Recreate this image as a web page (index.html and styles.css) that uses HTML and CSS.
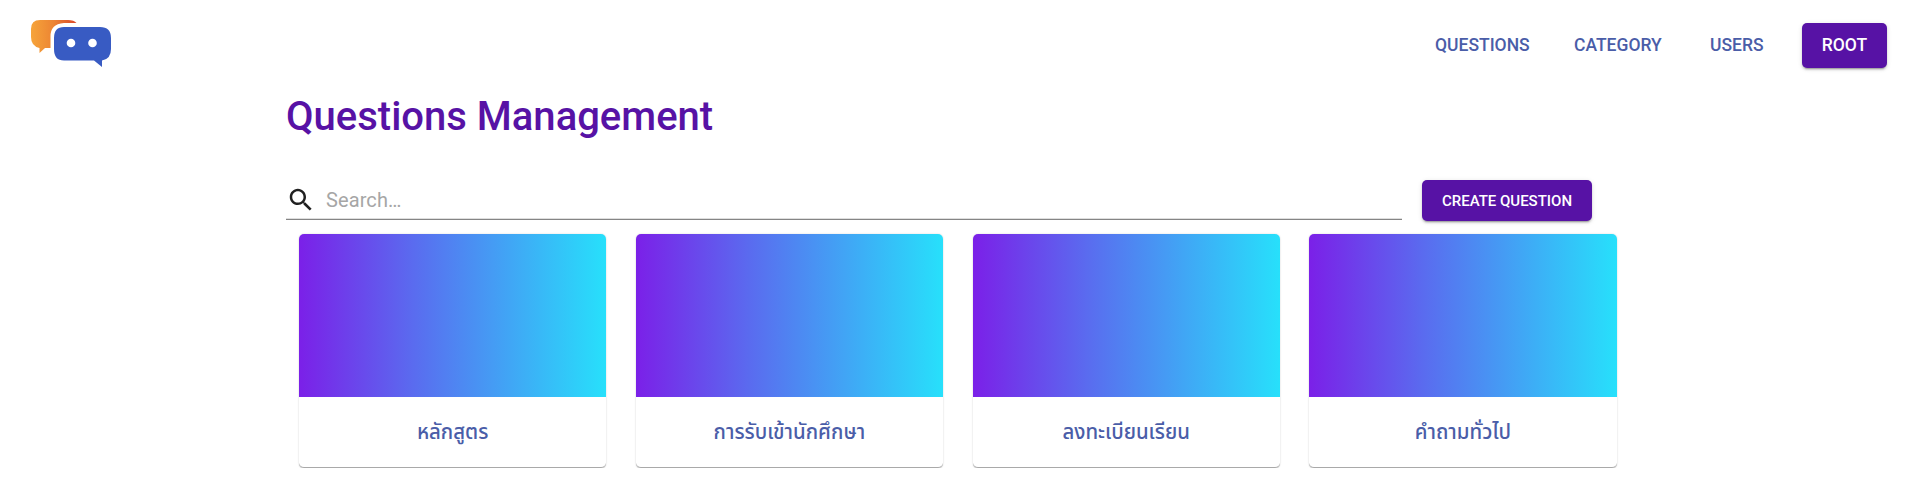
FILE: index.html
```html
<!DOCTYPE html>
<html lang="th">
<head>
<meta charset="utf-8">
<title>Questions Management</title>
<link rel="stylesheet" href="styles.css">
</head>
<body>
<header class="topbar">
  <a class="logo">
    <svg width="84" height="54" viewBox="0 0 84 54">
      <defs><linearGradient id="orange" x1="0" x2="1"><stop offset="0" stop-color="#f6a43a"/><stop offset=".5" stop-color="#ec8433"/><stop offset="1" stop-color="#d9482b"/></linearGradient></defs>
      <path fill="url(#orange)" d="M10 5H38Q44 5 46.500 8H34Q20 9 20.500 22V33H15L9.500 38V33Q1 31 1 22V14Q1 5 10 5Z"/>
      <path fill="#385bc3" d="M34 12H70Q81 12 81 23V34Q81 44 72 45.500V52L64 45.500H34Q24 45.500 24 34V23Q24 12 34 12Z"/>
      <circle cx="41" cy="28" r="4.300" fill="#fff"/><circle cx="62.500" cy="28" r="4.300" fill="#fff"/>
    </svg>
  </a>
  <nav class="nav">
    <a class="nav-link questions">QUESTIONS</a>
    <a class="nav-link category">CATEGORY</a>
    <a class="nav-link users">USERS</a>
    <button class="button root">ROOT</button>
  </nav>
</header>
<main class="content">
  <h1 class="title">Questions Management</h1>
  <div class="toolbar">
    <label class="search">
      <svg class="search-icon" viewBox="0 0 24 24"><path fill="#212121" d="M15.500 14h-.79l-.28-.27C15.410 12.590 16 11.110 16 9.500 16 5.910 13.090 3 9.500 3S3 5.910 3 9.500 5.910 16 9.500 16c1.610 0 3.090-.59 4.230-1.570l.27.28v.79l5 4.990L20.490 19l-4.990-5zm-6 0C7.010 14 5 11.990 5 9.500S7.010 5 9.500 5 14 7.010 14 9.500 11.990 14 9.500 14z"/></svg>
      <input class="search-input" type="text" placeholder="Search…">
    </label>
    <button class="button create">CREATE QUESTION</button>
  </div>
  <section class="cards">
    <article class="card"><div class="cover"></div><h2 class="name">หลักสูตร</h2></article>
    <article class="card"><div class="cover"></div><h2 class="name">การรับเข้านักศึกษา</h2></article>
    <article class="card"><div class="cover"></div><h2 class="name">ลงทะเบียนเรียน</h2></article>
    <article class="card"><div class="cover"></div><h2 class="name">คำถามทั่วไป</h2></article>
  </section>
</main>
</body>
</html>
```
FILE: styles.css
```css
* { box-sizing: border-box; }
body { margin: 0; background: #fff; font-family: Roboto, "Noto Sans Thai", "Noto Sans", sans-serif; }
.topbar { display: flex; justify-content: space-between; height: 91px; padding: 15px 29px 0 30px; }
.logo { display: block; height: 54px; }
.nav { display: flex; align-items: center; height: 61px; }
.nav-link { padding-bottom: 2px; font-size: 17.5px; font-weight: 500; line-height: 28px; color: #4a5da8; white-space: nowrap; }
.questions { width: 139px; }
.category { width: 136px; }
.users { width: 92px; }
.button { border: 0; padding: 0; border-radius: 5px; background: #5712a5; color: #fff; font-family: inherit; font-weight: 500; text-align: center; white-space: nowrap; box-shadow: 0 3px 1px -2px rgba(0,0,0,.2), 0 2px 2px rgba(0,0,0,.14), 0 1px 5px rgba(0,0,0,.12); }
.root { width: 85px; height: 45px; padding-bottom: 2px; font-size: 17.5px; }
.content { width: 1345px; margin-left: 286px; }
.title { margin: 0; height: 89px; padding-top: 1px; font-size: 40px; line-height: 50px; font-weight: 500; color: #5712a5; }
.toolbar { display: flex; gap: 20px; height: 54px; }
.search { display: flex; align-items: center; width: 1116px; height: 40px; border-bottom: 1px solid #858585; box-shadow: inset 0 -1px 0 #dedede; }
.search-icon { width: 30px; height: 30px; margin-top: 1px; }
.search-input { flex: 1; margin-left: 10px; padding: 1px 0 0; border: 0; outline: 0; background: none; font: 400 20px Roboto, sans-serif; letter-spacing: .1px; }
.search-input::placeholder { color: #a6a6a6; opacity: 1; }
.create { width: 170px; height: 41px; font-size: 15px; }
.cards { display: grid; grid-template-columns: repeat(4, 307.200px); gap: 29.600px; padding-left: 13px; }
.card { height: 234px; overflow: hidden; border-bottom: 1px solid #a9a9a9; border-radius: 5px; background: #fff; box-shadow: 0 1px 1px rgba(0,0,0,.14), 0 0 2px rgba(0,0,0,.16); }
.cover { height: 163px; background: linear-gradient(90deg, #7b20e8 0%, #5a6bef 37%, #27e0fb 100%); }
.name { margin: 0; padding-top: 20px; font-size: 20.4px; line-height: 30px; font-weight: 500; text-align: center; color: #4a5da8; }
```
